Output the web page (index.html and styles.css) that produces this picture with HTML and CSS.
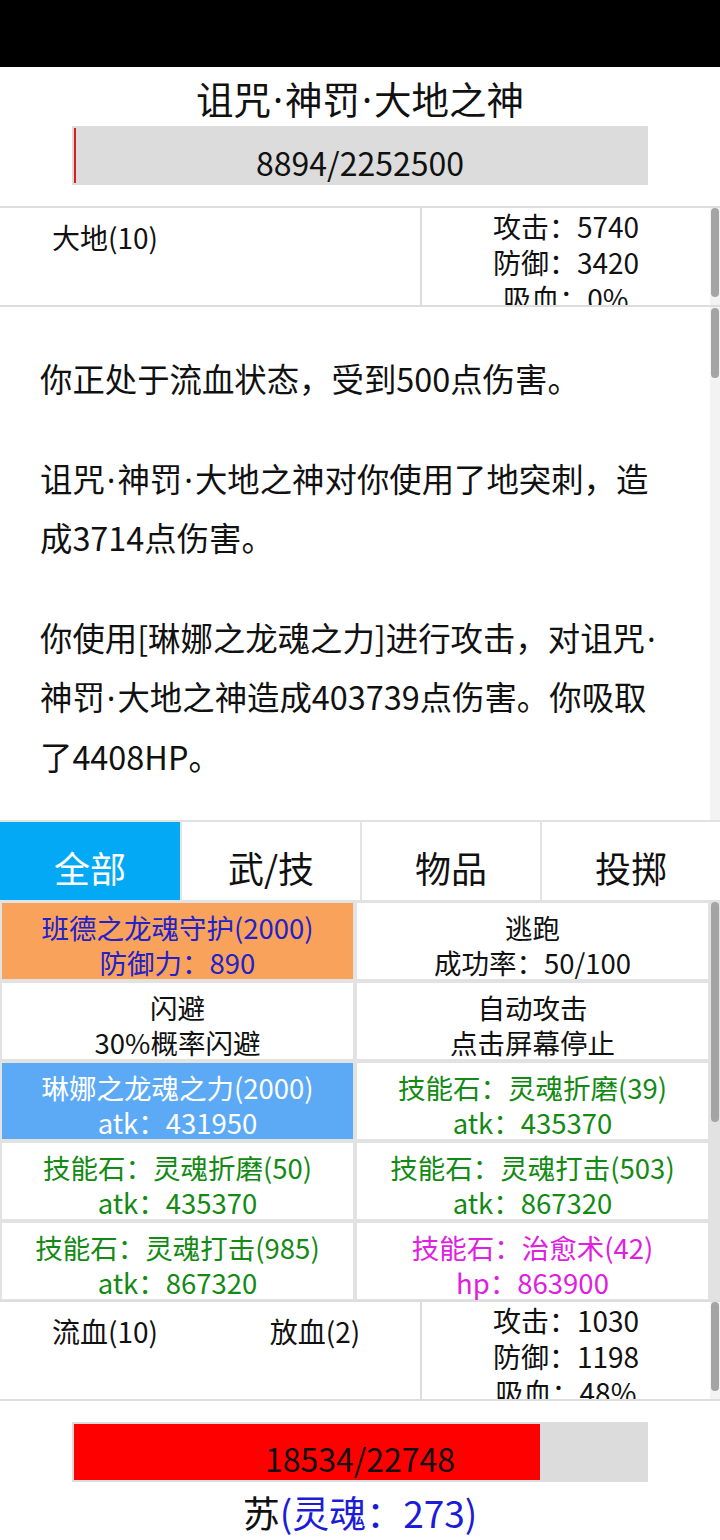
FILE: index.html
```html
<!DOCTYPE html>
<html lang="zh-CN">
<head>
<meta charset="utf-8">
<title>战斗</title>
<link rel="stylesheet" href="styles.css">
</head>
<body>
<div class="statusbar"></div>

<header class="enemy">
  <h1 class="enemy-name">诅咒<span class="dot">·</span>神罚<span class="dot">·</span>大地之神</h1>
  <div class="hpbar">
    <div class="hpfill enemy-fill" style="width:0.39%"></div>
    <span class="hptext">8894/2252500</span>
  </div>
</header>

<section class="status">
  <div class="buffs">
    <span class="buff">大地(10)</span>
  </div>
  <div class="stats">
    <div class="stat">攻击：5740</div>
    <div class="stat">防御：3420</div>
    <div class="stat">吸血：0%</div>
  </div>
  <div class="track"><div class="thumb thumb-status"></div></div>
</section>

<section class="log">
  <div class="log-content">
    <p>你正处于流血状态，受到500点伤害。</p>
    <p>诅咒<span class="dot">·</span>神罚<span class="dot">·</span>大地之神对你使用了地突刺，造成3714点伤害。</p>
    <p>你使用[琳娜之龙魂之力]进行攻击，对诅咒<span class="dot">·</span>神罚<span class="dot">·</span>大地之神造成403739点伤害。你吸取了4408HP。</p>
  </div>
  <div class="track"><div class="thumb thumb-log"></div></div>
</section>

<nav class="tabs">
  <div class="tab active">全部</div>
  <div class="tab">武/技</div>
  <div class="tab">物品</div>
  <div class="tab">投掷</div>
</nav>

<section class="actions">
  <div class="grid">
    <div class="cell cell-guard"><span>班德之龙魂守护(2000)</span><span>防御力：890</span></div>
    <div class="cell"><span>逃跑</span><span>成功率：50/100</span></div>
    <div class="cell"><span>闪避</span><span>30%概率闪避</span></div>
    <div class="cell"><span>自动攻击</span><span>点击屏幕停止</span></div>
    <div class="cell cell-selected"><span>琳娜之龙魂之力(2000)</span><span>atk：431950</span></div>
    <div class="cell green"><span>技能石：灵魂折磨(39)</span><span>atk：435370</span></div>
    <div class="cell green"><span>技能石：灵魂折磨(50)</span><span>atk：435370</span></div>
    <div class="cell green"><span>技能石：灵魂打击(503)</span><span>atk：867320</span></div>
    <div class="cell green"><span>技能石：灵魂打击(985)</span><span>atk：867320</span></div>
    <div class="cell magenta"><span>技能石：治愈术(42)</span><span>hp：863900</span></div>
  </div>
  <div class="track grid-track"><div class="thumb thumb-grid"></div></div>
</section>

<section class="status player-status">
  <div class="buffs">
    <span class="buff">流血(10)</span>
    <span class="buff">放血(2)</span>
  </div>
  <div class="stats">
    <div class="stat">攻击：1030</div>
    <div class="stat">防御：1198</div>
    <div class="stat">吸血：48%</div>
  </div>
  <div class="track"><div class="thumb thumb-status"></div></div>
</section>

<footer class="player">
  <div class="hpbar player-bar">
    <div class="hpfill" style="width:81.48%"></div>
    <span class="hptext">18534/22748</span>
  </div>
  <div class="player-name">苏<span class="soul">(灵魂：273)</span></div>
</footer>
</body>
</html>
```

FILE: styles.css
```css
* {
  box-sizing: border-box;
}

html, body {
  margin: 0;
  padding: 0;
}

body {
  width: 720px;
  height: 1540px;
  overflow: hidden;
  background: #ffffff;
  color: #111111;
  font-family: "Noto Sans CJK SC", "Noto Sans", sans-serif;
}

.statusbar {
  height: 67px;
  background: #000000;
}

/* ---------- enemy header ---------- */
.enemy-name {
  margin: 0;
  height: 59px;
  line-height: 62px;
  font-size: 37.5px;
  font-weight: 400;
  text-align: center;
  white-space: nowrap;
}

.hpbar {
  display: grid;
  width: 576px;
  height: 59px;
  margin: 0 auto 21px;
  padding: 2px;
  background: #dcdcdc;
}

.hpfill {
  grid-area: 1 / 1;
  height: 100%;
  background: #ff0000;
}

.enemy-fill {
  background: #d81e1e;
}

.hptext {
  grid-area: 1 / 1;
  align-self: center;
  justify-self: center;
  padding-top: 12px;
  font-size: 32px;
  line-height: 36px;
  color: #111111;
}

/* ---------- status panels ---------- */
.status {
  display: flex;
  height: 101px;
  border-top: 2px solid #dddddd;
  border-bottom: 2px solid #dddddd;
}

.buffs {
  width: 420px;
  display: grid;
  grid-template-columns: 210px 210px;
  align-content: start;
  padding-top: 11px;
}

.buff {
  text-align: center;
  font-size: 28px;
  line-height: 36px;
}

.stats {
  flex: 1;
  border-left: 2px solid #dddddd;
  overflow: hidden;
  text-align: center;
  font-size: 28px;
  line-height: 36px;
}

.track {
  width: 10px;
  flex: none;
  background: #f3f3f3;
  padding: 0 1px;
}

.thumb {
  width: 8px;
  border-radius: 4px;
  background: #a4a4a4;
}

.thumb-status {
  height: 89px;
}

.thumb-log {
  height: 70px;
  margin-top: 1px;
}

.thumb-grid {
  height: 220px;
  margin-top: 2px;
}

/* ---------- battle log ---------- */
.log {
  display: flex;
  height: 515px;
  border-bottom: 2px solid #e2e2e2;
}

.log-content {
  flex: 1;
  overflow: hidden;
  padding: 1px 40px 0 40px;
  font-size: 32.4px;
  line-height: 59.5px;
}

.log-content p {
  margin: 40px 0 0;
}

.dot {
  font-family: "Noto Sans", sans-serif;
  padding: 0 2px;
  line-height: 0;
}

/* ---------- tabs ---------- */
.tabs {
  display: grid;
  grid-template-columns: repeat(4, 1fr);
  height: 78px;
}

.tab {
  display: flex;
  align-items: center;
  justify-content: center;
  padding-top: 12px;
  font-size: 36px;
  border-left: 2px solid #e4e4e4;
}

.tab:first-child {
  border-left: none;
}

.tab.active {
  background: #03a9f4;
  color: #ffffff;
}

/* ---------- action grid ---------- */
.actions {
  display: flex;
  height: 400px;
  background: #e2e2e2;
}

.grid {
  flex: 1;
  display: grid;
  grid-template-columns: 1fr 1fr;
  grid-auto-rows: 76px;
  gap: 4px;
  padding: 3px 2px 0 2px;
  overflow: hidden;
}

.cell {
  display: flex;
  flex-direction: column;
  align-items: center;
  justify-content: flex-start;
  padding-top: 7px;
  background: #ffffff;
  font-size: 27.5px;
  line-height: 35px;
  white-space: nowrap;
}

.cell-guard {
  background: #f9a25c;
  color: #2222c8;
}

.cell-selected {
  background: #5caaf6;
  color: #ffffff;
}

.green {
  color: #138a13;
}

.magenta {
  color: #e020e0;
}

.grid-track {
  background: #e2e2e2;
}

/* ---------- player ---------- */
.player-status {
  height: 101px;
}

.player-bar {
  margin-top: 21px;
  margin-bottom: 0;
  height: 60px;
}

.player-name {
  text-align: center;
  font-size: 37px;
  line-height: 60px;
}

.soul {
  color: #1c1cd8;
}
```
